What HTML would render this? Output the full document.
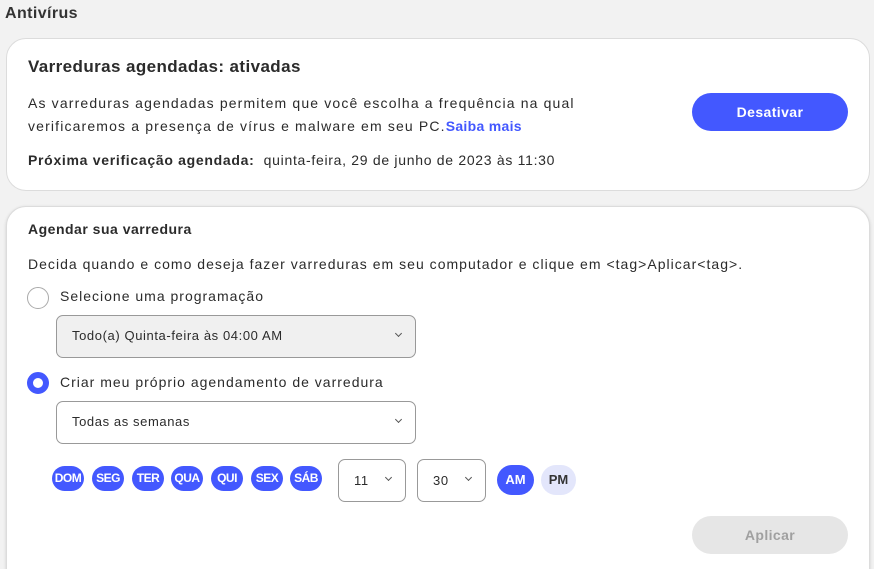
<!DOCTYPE html>
<html style="height:569px;overflow:hidden"><head><meta charset="utf-8"><style>
*{box-sizing:border-box;margin:0;padding:0}
body{width:874px;height:569px;background:#f2f2f2;font-family:"Liberation Sans",sans-serif;color:#2b2b2b;position:relative;overflow:hidden}
.a{position:absolute;white-space:nowrap}
.t{letter-spacing:1px}
.card{position:absolute;background:#fff;border:1px solid #dcdcdc;border-radius:20px}
.btn{position:absolute;border-radius:19px;font-weight:bold;font-size:14px;text-align:center;line-height:38px;letter-spacing:.4px}
.sel{position:absolute;border:1px solid #999;border-radius:7px;font-size:13px;padding-left:15px;line-height:40px;letter-spacing:.6px}
.chev{position:absolute;right:14px;top:15px;width:5px;height:5px;border-right:1.5px solid #555;border-bottom:1.5px solid #555;transform:rotate(45deg)}
.day{position:absolute;top:466px;width:32px;height:25px;border-radius:13px;background:#4358ff;color:#fff;font-weight:bold;font-size:12px;text-align:center;line-height:25px;letter-spacing:-0.5px}
</style></head><body>
<div class="a" style="left:5px;top:5px;font-size:16px;font-weight:bold;color:#333;letter-spacing:.4px">Antivírus</div>
<div class="card" style="left:6px;top:38px;width:864px;height:153px"></div>
<div class="a" style="left:28px;top:57px;font-size:17px;font-weight:bold;letter-spacing:.4px">Varreduras agendadas: ativadas</div>
<div class="a t" style="left:28px;top:92px;font-size:14px;line-height:23px;letter-spacing:1.15px">As varreduras agendadas permitem que você escolha a frequência na qual<br>verificaremos a presença de vírus e malware em seu PC.<b style="color:#4358ff;letter-spacing:.3px">Saiba mais</b></div>
<div class="a" style="left:28px;top:152px;font-size:14px;letter-spacing:.7px"><b>Próxima verificação agendada:</b>&nbsp; quinta-feira, 29 de junho de 2023 às 11:30</div>
<div class="btn" style="left:692px;top:93px;width:156px;background:#4358ff;color:#fff">Desativar</div>

<div class="card" style="left:6px;top:206px;width:864px;height:385px;box-shadow:0 1px 3px rgba(0,0,0,.15)"></div>
<div class="a" style="left:28px;top:221px;font-size:14px;font-weight:bold;letter-spacing:.5px">Agendar sua varredura</div>
<div class="a" style="left:28px;top:256px;font-size:14px;letter-spacing:1.02px">Decida quando e como deseja fazer varreduras em seu computador e clique em &lt;tag&gt;Aplicar&lt;tag&gt;.</div>
<div class="a" style="left:27px;top:287px;width:22px;height:22px;border:1px solid #aaa;border-radius:50%"></div>
<div class="a t" style="left:60px;top:288px;font-size:14px">Selecione uma programação</div>
<div class="sel" style="left:56px;top:315px;width:360px;height:43px;background:#f0f0f0">Todo(a) Quinta-feira às 04:00 AM<span class="chev"></span></div>
<div class="a" style="left:27px;top:372px;width:22px;height:22px;border:6px solid #4358ff;border-radius:50%"></div>
<div class="a t" style="left:60px;top:374px;font-size:14px">Criar meu próprio agendamento de varredura</div>
<div class="sel" style="left:56px;top:401px;width:360px;height:43px;background:#fff">Todas as semanas<span class="chev"></span></div>
<div class="day" style="left:52px">DOM</div>
<div class="day" style="left:92px">SEG</div>
<div class="day" style="left:132px">TER</div>
<div class="day" style="left:171px">QUA</div>
<div class="day" style="left:211px">QUI</div>
<div class="day" style="left:251px">SEX</div>
<div class="day" style="left:290px">SÁB</div>
<div class="sel" style="left:338px;top:459px;width:68px;height:43px;line-height:41px">11<span class="chev"></span></div>
<div class="sel" style="left:417px;top:459px;width:69px;height:43px;line-height:41px">30<span class="chev"></span></div>
<div class="a" style="left:497px;top:465px;width:37px;height:30px;border-radius:15px;background:#4358ff;color:#fff;font-weight:bold;font-size:13px;text-align:center;line-height:30px">AM</div>
<div class="a" style="left:541px;top:465px;width:35px;height:30px;border-radius:15px;background:#e3e6fb;color:#333;font-weight:bold;font-size:13px;text-align:center;line-height:30px">PM</div>
<div class="btn" style="left:692px;top:516px;width:156px;background:#e6e6e6;color:#a0a0a0">Aplicar</div>
</body></html>
